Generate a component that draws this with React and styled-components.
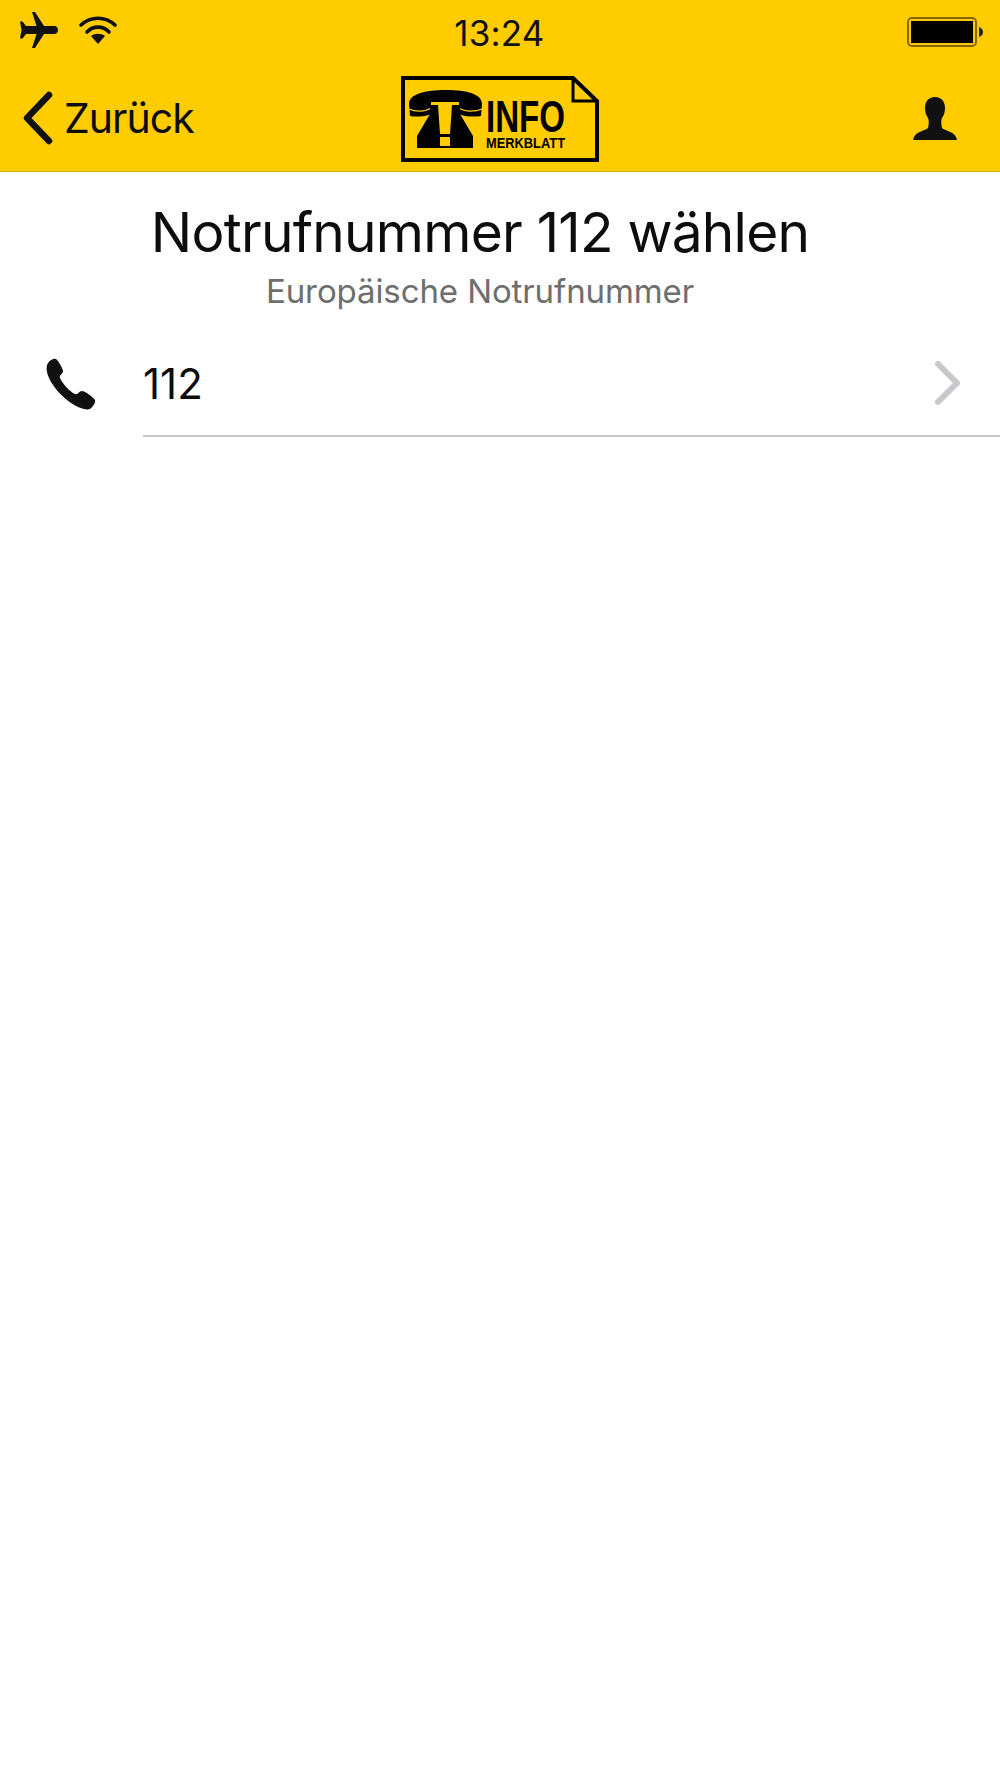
import React from 'react';
import styled, { createGlobalStyle } from 'styled-components';

const GlobalStyle = createGlobalStyle`
  html, body {
    margin: 0;
    padding: 0;
    background: #fff;
    font-family: Inter, "Liberation Sans", sans-serif;
  }
`;

const Page = styled.div`
  width: 1000px;
  height: 1778px;
  background: #fff;
  overflow: hidden;
`;

const Header = styled.header`
  height: 171px;
  background: #ffcc00;
  border-bottom: 1px solid #cfa800;
  display: flex;
  flex-direction: column;
`;

const StatusBar = styled.div`
  height: 60px;
  padding: 0 17px 0 20px;
  display: grid;
  grid-template-columns: 1fr auto 1fr;
  align-items: center;
  color: #111;
`;

const StatusLeft = styled.div`
  display: flex;
  align-items: center;
  gap: 21px;
`;

const Clock = styled.div`
  font-size: 35px;
  letter-spacing: 0.2px;
  color: #111;
  margin-left: -4px;
  padding-top: 6px;
`;

const Battery = styled.svg`
  justify-self: end;
  margin-top: 4px;
`;

const NavBar = styled.nav`
  flex: 1;
  padding: 0 43px;
  display: grid;
  grid-template-columns: 1fr auto 1fr;
  align-items: center;
`;

const BackLink = styled.div`
  display: flex;
  align-items: center;
  gap: 11px;
  margin-left: -20px;
  margin-top: 5px;
  font-size: 41px;
  letter-spacing: -1px;
  color: #0d0d0d;
`;

const Logo = styled.svg`
  display: block;
  margin-top: 7px;
`;

const ProfileIcon = styled.svg`
  justify-self: end;
  margin-top: 6px;
`;

const TitleBlock = styled.div`
  width: 960px;
  padding-top: 30px;
  text-align: center;
`;

const Title = styled.h1`
  margin: 0;
  font-size: 55px;
  line-height: 60px;
  letter-spacing: -0.75px;
  font-weight: 400;
  color: #0d0d0d;
`;

const Subtitle = styled.div`
  margin-top: 9px;
  font-size: 33px;
  line-height: 40px;
  letter-spacing: -0.1px;
  color: #6e6e6e;
`;

const Row = styled.div`
  display: flex;
  margin-top: 20px;
`;

const RowIcon = styled.div`
  width: 143px;
  flex: none;
  padding: 27px 0 0 46px;
  box-sizing: border-box;
`;

const RowBody = styled.div`
  flex: 1;
  height: 106px;
  padding-right: 40px;
  box-sizing: border-box;
  border-bottom: 2px solid #c8c7cc;
  display: flex;
  align-items: center;
  justify-content: space-between;
  font-size: 42px;
  color: #0d0d0d;
`;

const PlaneIcon = () => (
  <svg width="38" height="36" viewBox="0 0 38 36">
    <path
      d="M12 0 L15 0 L24 14 L34 14 C37 14 38 16.5 38 18 C38 19.5 37 22 34 22 L24 22 L15 36 L12 36 L16.5 22 L6 22 L2.5 26.5 L0 26.5 L1.5 18 L0 9.5 L2.5 9.5 L6 14 L16.5 14 Z"
      fill="#111"
    />
  </svg>
);

const WifiIcon = () => (
  <svg width="38" height="28" viewBox="0 0 38 28">
    <path d="M2 9 C12 0 26 0 36 9" fill="none" stroke="#111" strokeWidth="3.6" strokeLinecap="round" />
    <path d="M8 16 C14 9.5 24 9.5 30 16" fill="none" stroke="#111" strokeWidth="3.6" strokeLinecap="round" />
    <path d="M12 20 C16 17 22 17 26 20 L19 28 Z" fill="#111" />
  </svg>
);

const BackChevron = () => (
  <svg width="30" height="54" viewBox="0 0 30 54">
    <path d="M26 4 L4 27 L26 50" fill="none" stroke="#111" strokeWidth="6.5" strokeLinecap="round" strokeLinejoin="round" />
  </svg>
);

const LogoMark = () => (
  <Logo width="198" height="86" viewBox="0 0 198 86">
    <path d="M2 2 H172 L196 25 V84 H2 Z" fill="none" stroke="#000" strokeWidth="4" />
    <path d="M172 3 V25 H195" fill="none" stroke="#000" strokeWidth="3" />
    {/* handset */}
    <path
      d="M8 28 C8 18 24 14 45 14 C66 14 81 18 81 28 L80 40 C74 41 64 41 58 38 L58 30 C50 27 38 27 30 30 L30 38 C24 41 14 41 9 40 Z"
      fill="#000"
    />
    <path d="M8 33 C14 36 24 36 30 32 M58 32 C64 36 74 36 81 33" fill="none" stroke="#ffcc00" strokeWidth="1.2" />
    {/* body */}
    <path d="M29 26 H59 V38 L72 60 V72 H16 V60 L29 38 Z" fill="#000" />
    <path d="M30 26 H58 V29 H51 L49 58 H39 L37 29 H30 Z" fill="#ffcc00" />
    <rect x="39" y="61" width="10" height="9" fill="#ffcc00" />
    <text x="85" y="56" fontFamily="'Liberation Sans', sans-serif" fontWeight="700" fontSize="44" textLength="79" lengthAdjust="spacingAndGlyphs" fill="#000">INFO</text>
    <text x="85" y="72" fontFamily="'Liberation Sans', sans-serif" fontWeight="700" fontSize="15" textLength="79" lengthAdjust="spacingAndGlyphs" fill="#000">MERKBLATT</text>
  </Logo>
);

const PersonIcon = () => (
  <ProfileIcon width="44" height="44" viewBox="0 0 44 44">
    <path
      d="M22 0 C29 0 32 5 32 11 C32 15 31 18 29 21 C28 23 28 27 29 31 C32 34 40 34 43 40 L44 43 H0 L1 40 C4 34 12 34 15 31 C16 27 16 23 15 21 C13 18 12 15 12 11 C12 5 15 0 22 0 Z"
      fill="#111"
    />
  </ProfileIcon>
);

const PhoneIcon = () => (
  <svg width="50" height="52" viewBox="0 0 50 52">
    <path
      d="M2 5 C4 2 8 0 10 1 C12 2 17 11 17 13 C17 16 13 17 14 20 C16 25 24 34 29 36 C32 37 33 33 36 33 C39 33 47 39 49 42 C50 44 47 49 44 51 C41 52 36 51 30 48 C20 43 8 31 3 20 C0 13 0 8 2 5 Z"
      fill="#111"
    />
  </svg>
);

const ForwardChevron = () => (
  <svg width="26" height="44" viewBox="0 0 26 44">
    <path d="M4 3 L23 22 L4 41" fill="none" stroke="#c7c7cc" strokeWidth="6" strokeLinecap="round" strokeLinejoin="round" />
  </svg>
);

const App = () => {
  return (
    <Page>
      <GlobalStyle />
      <Header>
        <StatusBar>
          <StatusLeft>
            <PlaneIcon />
            <WifiIcon />
          </StatusLeft>
          <Clock>13:24</Clock>
          <Battery width="76" height="30" viewBox="0 0 76 30">
            <rect x="1" y="1" width="68" height="28" rx="4" fill="none" stroke="#8a6400" strokeWidth="2" />
            <rect x="4" y="4" width="62" height="22" fill="#000" />
            <path d="M72 10 C75 11 76 13 76 15 C76 17 75 19 72 20 Z" fill="#222" />
          </Battery>
        </StatusBar>
        <NavBar>
          <BackLink>
            <BackChevron />
            Zurück
          </BackLink>
          <LogoMark />
          <PersonIcon />
        </NavBar>
      </Header>
      <TitleBlock>
        <Title>Notrufnummer 112 wählen</Title>
        <Subtitle>Europäische Notrufnummer</Subtitle>
      </TitleBlock>
      <Row>
        <RowIcon>
          <PhoneIcon />
        </RowIcon>
        <RowBody>
          112
          <ForwardChevron />
        </RowBody>
      </Row>
    </Page>
  );
};

export default App;
